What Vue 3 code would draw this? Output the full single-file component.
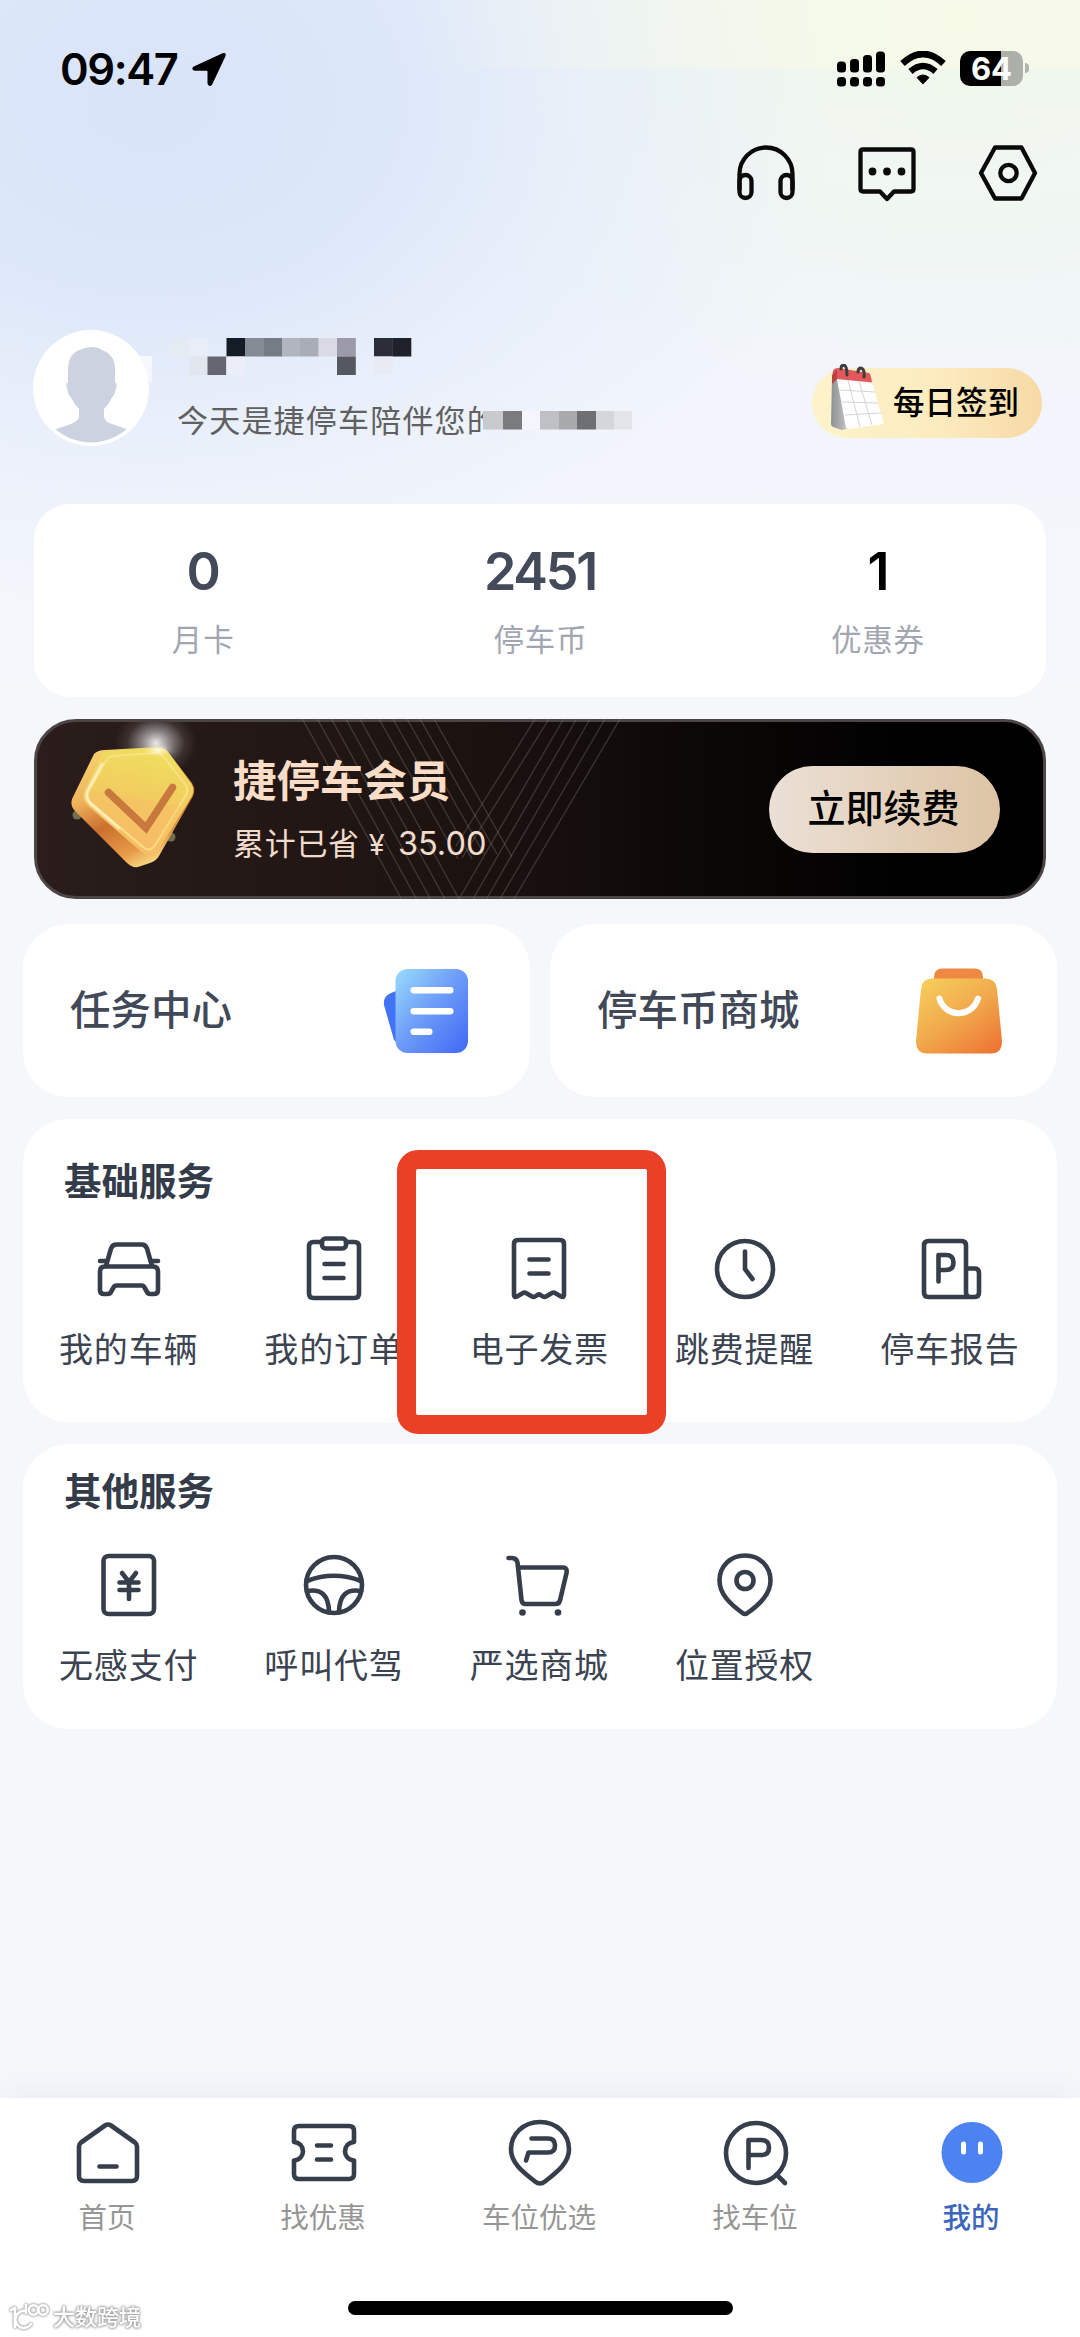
<script setup>
const stats = [
  { value: '0', label: '月卡' },
  { value: '2451', label: '停车币' },
  { value: '1', label: '优惠券', strong: true },
]

const nameBlocks = [
  [170, 0, '#e5ebf3'], [189, 0, '#e8edf7'],
  [226.5, 0, '#141d26'], [245, 0, '#858b94'], [263.5, 0, '#767c85'], [282, 0, '#b0b5bf'],
  [300, 0, '#a8adb7'], [318.5, 0, '#d9dae6'], [337, 0, '#9a9aa8'], [374, 0, '#2b2d39'], [392.5, 0, '#1f212b'],
  [189, 1, '#e2e6ef'], [207.5, 1, '#666672'], [226.5, 1, '#ebedf8'], [337, 1, '#55585e'], [374, 1, '#e8ebf4'],
]
const dayBlocks = [
  [483, '#c9cacd', 20], [503, '#7a7b7c', 19], [522, '#f5f6fd', 18], [540, '#bfc0c5', 19], [559, '#a8a9ad', 18],
  [577, '#6e6f74', 19], [596, '#d5d6db', 18], [614, '#e3e4ea', 18],
]

const slantsDown = [
  [302.5, 0, 401.5, 180], [317.5, 0, 416.5, 180], [331.5, 0, 430.5, 180], [346, 0, 445, 180], [360, 0, 459, 180],
  [379, 0, 458, 140], [393, 0, 472, 140], [407, 0, 484, 135], [420, 0, 497, 135], [434, 0, 512, 138],
]
const slantsUp = [
  [459, 180, 563.5, 0], [473, 180, 576.5, 0], [486.5, 180, 590, 0], [500, 180, 605, 0], [514, 180, 620, 0],
  [456, 127, 535, 0], [462, 139, 549, 0],
]

const basics = [
  { icon: 'car', label: '我的车辆' },
  { icon: 'order', label: '我的订单' },
  { icon: 'invoice', label: '电子发票' },
  { icon: 'clock', label: '跳费提醒' },
  { icon: 'report', label: '停车报告' },
]
const others = [
  { icon: 'pay', label: '无感支付' },
  { icon: 'wheel', label: '呼叫代驾' },
  { icon: 'cart', label: '严选商城' },
  { icon: 'pin', label: '位置授权' },
]

/* 72 × 72 canvas, centred on 36,36 */
const glyphs = {
  car: '<path d="M13 33 18 15.500Q19.500 11.500 23.500 11.500H48.500Q52.500 11.500 54 15.500L59 33M7 28H12M60 28H65"/><path d="M12 33.500H60Q65 33.500 65 38.500V57Q65 61 61 61H57.500Q54.500 61 53.500 58L51.500 54.500Q50.500 52.500 48.500 52.500H23.500Q21.500 52.500 20.500 54.500L18.500 58Q17.500 61 14.500 61H11Q7 61 7 57V38.500Q7 33.500 12 33.500Z"/>',
  order: '<path d="M24 9H15.500Q11 9 11 13.500V60.500Q11 65 15.500 65H56.500Q61 65 61 60.500V13.500Q61 9 56.500 9H48"/><rect x="24" y="5.500" width="24" height="10" rx="3.500"/><path d="M26.500 31H45.500M26.500 45H45.500"/>',
  invoice: '<path d="M11 62V11Q11 7 15 7H57Q61 7 61 11V62Q61 65 58 63.500L52 60Q50.500 59 49 60L43 63.500Q41 64.500 39 63L37 61.500Q36 61 35 61.500L33 63Q31 64.500 29 63.500L23 60Q21.500 59 20 60L14 63.500Q11 65 11 62Z"/><path d="M26.500 26.500H45.500M26.500 40.500H45.500"/>',
  clock: '<circle cx="36" cy="36" r="28"/><path d="M36 18.500V36L43.500 46"/>',
  report: '<path d="M46 64H14.500Q10 64 10 59.500V12.500Q10 8 14.500 8H47.500Q52 8 52 12.500V59Q52 64 56 64M52 35.500H60.500Q65 35.500 65 40V59.500Q65 64 60.500 64H44"/><path d="M24.500 48.500V22H32Q39.500 22 39.500 29.500T32 37H25"/>',
  pay: '<rect x="10.500" y="7" width="50.500" height="58" rx="5"/><path d="M29 24 36 33 43 24M26.500 33.500H45.500M26.500 41H45.500M36 33V50"/>',
  wheel: '<circle cx="36" cy="36" r="28"/><path d="M9 32Q36 21.500 63 32M9 42Q30.500 38 31 63M63 42Q41.500 38 41 63"/>',
  cart: '<path d="M5.500 9H9Q13.500 9 14.500 13.500L18.500 51Q19 55 22.500 55H52.500Q56 55 57 51.500L63.500 24Q64.500 18.500 60 18.500H15"/><circle cx="19.500" cy="63.500" r="3.300" fill="currentColor" stroke="none"/><circle cx="55" cy="63.500" r="3.300" fill="currentColor" stroke="none"/>',
  pin: '<path d="M36 6.500C50.500 6.500 61.500 17 61.500 31.500C61.500 45 51 55 38.500 64Q36 66 33.500 64C21 55 10.500 45 10.500 31.500C10.500 17 21.500 6.500 36 6.500Z"/><circle cx="36" cy="31.500" r="8.500"/>',
  home: '<path d="M7 28.500Q7 26 9 24.500L33 7.500Q36 5.500 39 7.500L63 24.500Q65 26 65 28.500V58Q65 63 60 63H12Q7 63 7 58Z"/><path d="M27.500 48.500H44.500"/>',
  ticket: '<path d="M6 24V13Q6 8 11 8H61Q66 8 66 13V24C54 25.500 54 41 66 42.500V56Q66 61 61 61H11Q6 61 6 56V42.500C18 41 18 25.500 6 24Z"/><path d="M29 27.500H43M29 41.500H43"/>',
  spot: '<path d="M36 4C52.500 4 65 16 65 31.500C65 45 53 54 41 63.500Q36 67.500 31 63.500C19 54 7 45 7 31.500C7 16 19.500 4 36 4Z"/><path d="M27.500 20.500H44Q51 20.500 51 27.500T44 34.500H24.500L22 42.500"/>',
  search: '<circle cx="36" cy="35" r="30"/><path d="M56.500 56.500 65 65"/><path d="M28.500 50V22H41Q49 22 49 29.500T41 37H29"/>',
}

const tabs = [
  { icon: 'home', label: '首页' },
  { icon: 'ticket', label: '找优惠' },
  { icon: 'spot', label: '车位优选' },
  { icon: 'search', label: '找车位' },
  { icon: 'me', label: '我的', active: true },
]
</script>

<template>
  <div class="screen">
    <header class="status">
      <div class="clock">
        <span class="time">09:47</span>
        <svg width="36" height="36" viewBox="0 0 36 36"><path d="M2.800 15.600 31.500 2.200Q36 .8 34.300 5.500L21.300 33.300Q20.300 35.400 18.300 34.700 16.500 34 16.500 32V20.500Q16.500 19.700 15.700 19.700H4Q1.800 19.700 1.400 18 1.100 16.400 2.800 15.600Z" /></svg>
      </div>
      <div class="signals">
        <svg width="48" height="36" viewBox="0 0 48 36">
          <rect x="0" y="10.500" width="9" height="11" rx="3.500" /><rect x="13" y="8" width="9" height="13.500" rx="3.500" /><rect x="26" y="4" width="9" height="17.500" rx="3.500" /><rect x="39" y="0.500" width="9" height="21" rx="3.500" />
          <rect x="0" y="26" width="9" height="9.500" rx="3.500" /><rect x="13" y="26" width="9" height="9.500" rx="3.500" /><rect x="26" y="26" width="9" height="9.500" rx="3.500" /><rect x="39" y="26" width="9" height="9.500" rx="3.500" />
        </svg>
        <svg class="wifi" width="46" height="36" viewBox="0 0 46 36">
          <path d="M2.500 12.500Q23-6.500 43.500 12.500" fill="none" stroke="#000" stroke-width="6.600" />
          <path d="M10.500 20.500Q23 9.500 35.500 20.500" fill="none" stroke="#000" stroke-width="6.400" />
          <path d="M17 26.500Q23 21.500 29 26.500L23 33Z" stroke="#000" stroke-width="1" />
        </svg>
        <div class="battery"><span>64</span></div>
        <i class="nub"></i>
      </div>
    </header>

    <div class="actions">
      <svg width="60" height="60" viewBox="0 0 60 60"><path d="M3.500 46V30A26.500 26.500 0 0 1 56.500 30V46" /><rect x="3.500" y="31" width="12" height="23" rx="6" /><rect x="44.500" y="31" width="12" height="23" rx="6" /></svg>
      <svg width="60" height="60" viewBox="0 0 60 60"><path d="M6 5.500H54Q56.500 5.500 56.500 8V45Q56.500 47.500 54 47.500H37L30 55 23 47.500H6Q3.500 47.500 3.500 45V8Q3.500 5.500 6 5.500Z" /><g class="dots"><circle cx="15.500" cy="27.500" r="3.900" /><circle cx="30" cy="27.500" r="3.900" /><circle cx="44.500" cy="27.500" r="3.900" /></g></svg>
      <svg width="60" height="60" viewBox="0 0 60 60"><path d="M17 3.500H43.500L57 29 43.500 54.500H17L3 29Z" /><circle cx="30.500" cy="29" r="8.200" /></svg>
    </div>

    <section class="profile">
      <svg class="avatar" width="128" height="116" viewBox="0 0 128 116">
        <defs><clipPath id="face"><circle cx="58" cy="58" r="54.500" /></clipPath></defs>
        <path d="M100 26H119V53L113 47Z" fill="#f7f8fd" />
        <circle cx="58" cy="58" r="58" fill="#fff" />
        <path clip-path="url(#face)" fill="#ccd2df" d="M58 17Q66 17 70 20.500Q82 25 82 39V52Q85 54 82.500 60Q81 66 79 67.500Q76 74 71 79V87Q72 92 79 94L96 100V120H20V100L38 94Q45 91 46 87V79Q41 74 38 67.500Q35 65 34.500 60Q32 54 35 52V39Q35 19 58 17Z" />
      </svg>
      <div class="who">
        <svg class="name" width="280" height="37" viewBox="170 0 280 37">
          <rect v-for="(b, i) in nameBlocks" :key="i" :x="b[0]" :y="b[1] * 18.500" width="18.800" height="18.500" :fill="b[2]" />
        </svg>
        <div class="days">
          <span>今天是捷停车陪伴您的</span>
          <svg class="mask" width="149" height="40" viewBox="483 0 149 40">
            <rect x="483" y="0" width="22" height="40" fill="#edf1fb" />
            <rect v-for="(b, i) in dayBlocks" :key="i" :x="b[0]" y="10" :width="b[2]" height="18.500" :fill="b[1]" />
          </svg>
        </div>
      </div>
      <div class="checkin">
        <svg width="56" height="68" viewBox="0 0 56 68">
          <defs><linearGradient id="pad" x1="0" y1="0" x2="1" y2="0"><stop offset="0" stop-color="#8f9092" /><stop offset="1" stop-color="#c9cacb" /></linearGradient></defs>
          <path d="M2 12 7 15 19 64 12 66 3 63Q1 62 1 60Z" fill="url(#pad)" />
          <path d="M7 15 42 18 54 60 18 65 16 64Z" fill="#fff" />
          <path d="M3 7Q4 4 8 4L39 9Q41 10 42 18.500L7 15 2 19V12Z" fill="#e2595b" />
          <path d="M2 12 7 5V15L2 20Z" fill="#b93f43" />
          <path d="M9 26 45 28M12 38 48 39M15 51 51 49M18 16 30 63M29 17 42 61" stroke="#d9d4d3" stroke-width="1" fill="none" />
          <path d="M11 5Q11 1 14 1Q17 2 17 11M28 8Q28 4 31 4Q35 5 34 13" stroke="#3c3c41" stroke-width="3" fill="none" stroke-linecap="round" />
        </svg>
        <span>每日签到</span>
      </div>
    </section>

    <section class="stats">
      <div v-for="s in stats" :key="s.label" class="stat">
        <b :class="{ strong: s.strong }">{{ s.value }}</b>
        <span>{{ s.label }}</span>
      </div>
    </section>

    <section class="vip">
      <svg class="vip-lines" width="1012" height="180" viewBox="34 0 1012 180">
        <g stroke="#8d8584" stroke-opacity=".33" stroke-width="1.300">
          <line v-for="(l, i) in slantsDown" :key="'d' + i" :x1="l[0]" :y1="l[1]" :x2="l[2]" :y2="l[3]" />
          <line v-for="(l, i) in slantsUp" :key="'u' + i" :x1="l[0]" :y1="l[1]" :x2="l[2]" :y2="l[3]" />
        </g>
      </svg>
      <svg class="gem" width="150" height="174" viewBox="60 722 150 174">
        <defs>
          <linearGradient id="gemSide" x1=".1" y1="0" x2=".6" y2="1"><stop offset="0" stop-color="#f5d873" /><stop offset=".35" stop-color="#f0b45c" /><stop offset=".6" stop-color="#cb6f2e" /><stop offset=".85" stop-color="#e79a48" /><stop offset="1" stop-color="#fbdc86" /></linearGradient>
          <linearGradient id="gemFace" x1=".6" y1="0" x2=".4" y2="1"><stop offset="0" stop-color="#efdf5f" /><stop offset=".5" stop-color="#f2ca60" /><stop offset="1" stop-color="#f7bb68" /></linearGradient>
          <radialGradient id="glow"><stop offset="0" stop-color="#fff" stop-opacity=".9" /><stop offset=".35" stop-color="#fff" stop-opacity=".45" /><stop offset=".7" stop-color="#fff" stop-opacity=".1" /><stop offset="1" stop-color="#fff" stop-opacity="0" /></radialGradient>
        </defs>
        <circle cx="77" cy="815" r="4.500" fill="#70704c" /><circle cx="171" cy="837" r="4.500" fill="#70704c" />
        <ellipse cx="156" cy="743" rx="41" ry="34" fill="url(#glow)" />
        <path d="M94 754Q98 750 105 750L158 747Q164 747 168 752L192 783Q196 789 193 796L159 856Q156 861 150 863L138 867Q132 868 127 863L75 811Q70 806 72 799Z" fill="url(#gemSide)" />
        <path d="M101 755Q104 751 110 751L156 747.500Q164 747 168 752L191 783Q195 789 192 796L157 852Q152 860 144 854L87 805Q81 799 84 791Z" fill="url(#gemFace)" />
        <path d="M107 759Q109 756 114 756L155 753Q161 753 164 757L185 784Q189 789 186 795L155 845Q150 853 143 847L91 803Q86 798 88 792Z" fill="none" stroke="#fbe58d" stroke-opacity=".8" stroke-width="2" />
        <path d="M92 792Q130 797 181 806L153 847 146 847 91 801Z" fill="#f9b96a" fill-opacity=".35" />
        <path d="M102 764 88 790Q84 798 91 804L119 828" fill="none" stroke="#fff3cd" stroke-width="3" stroke-linecap="round" opacity=".75" />
        <ellipse cx="158" cy="750" rx="17" ry="8" fill="url(#glow)" />
        <path d="M108.500 792.500 146 828 172.500 787.500" fill="none" stroke="#c8793e" stroke-width="7.500" stroke-linecap="round" />
      </svg>
      <div class="vip-text">
        <h2>捷停车会员</h2>
        <p>累计已省<i>¥</i> <em>35.00</em></p>
      </div>
      <button class="renew"><span>立即续费</span></button>
    </section>

    <section class="duo">
      <div class="entry">
        <span>任务中心</span>
        <svg width="86" height="86" viewBox="0 0 86 86">
          <defs><linearGradient id="sheet" x1="0" y1="0" x2="1" y2="1"><stop offset="0" stop-color="#9adcfd" /><stop offset=".45" stop-color="#6f9ff8" /><stop offset="1" stop-color="#3f68f5" /></linearGradient></defs>
          <path d="M13 23 8 25Q0 28 1 37L11 72 18 78Z" fill="#4272f5" />
          <rect x="12.500" y="1" width="72.500" height="84" rx="12" fill="url(#sheet)" />
          <g fill="#fff"><rect x="27.500" y="19" width="43" height="6.500" rx="3.200" /><rect x="27.500" y="40" width="43" height="6.500" rx="3.200" /><rect x="27.500" y="60.500" width="22" height="6.500" rx="3.200" /></g>
        </svg>
      </div>
      <div class="entry mall">
        <span>停车币商城</span>
        <svg width="86" height="86" viewBox="0 0 86 86">
          <defs><linearGradient id="bag" x1=".1" y1="0" x2=".9" y2="1"><stop offset="0" stop-color="#f6cf5c" /><stop offset=".5" stop-color="#f1a94c" /><stop offset="1" stop-color="#ee7433" /></linearGradient></defs>
          <path d="M18 20V9Q18 .5 26.500 .5H58.500Q67 .5 67 9V20Z" fill="#ee8843" />
          <path d="M16 10.500H69Q80 10.500 81 21L86 73Q86 85.500 75 85.500H11Q0 85.500 0 73L5 21Q6 10.500 16 10.500Z" fill="url(#bag)" />
          <path d="M23.500 30.500C29 50 56 50 62 30.500" fill="none" stroke="#fff" stroke-width="6" stroke-linecap="round" />
        </svg>
      </div>
    </section>

    <section class="panel basic">
      <h3>基础服务</h3>
      <div class="grid">
        <div v-for="item in basics" :key="item.label" class="cell">
          <svg class="glyph" width="72" height="72" viewBox="0 0 72 72" v-html="glyphs[item.icon]"></svg>
          <span>{{ item.label }}</span>
        </div>
      </div>
      <div class="marker"></div>
    </section>

    <section class="panel other">
      <h3>其他服务</h3>
      <div class="grid">
        <div v-for="item in others" :key="item.label" class="cell">
          <svg class="glyph" width="72" height="72" viewBox="0 0 72 72" v-html="glyphs[item.icon]"></svg>
          <span>{{ item.label }}</span>
        </div>
      </div>
    </section>

    <nav class="tabbar">
      <div class="tabs">
        <div v-for="t in tabs" :key="t.label" class="tab" :class="{ active: t.active }">
          <svg v-if="t.active" width="72" height="72" viewBox="0 0 72 72"><circle cx="36" cy="34.500" r="30.500" fill="#4c83f0" /><rect x="25" y="23.500" width="5" height="13" rx="2.500" fill="#fff" /><rect x="42" y="23.500" width="5" height="13" rx="2.500" fill="#fff" /></svg>
          <svg v-else class="glyph" width="72" height="72" viewBox="0 0 72 72" v-html="glyphs[t.icon]"></svg>
          <span>{{ t.label }}</span>
        </div>
      </div>
      <div class="home-bar"></div>
      <div class="brand">
        <svg width="42" height="30" viewBox="0 0 42 30">
          <g fill="none" stroke-linecap="round" stroke-linejoin="round">
            <path d="M3 8 7 6V25M17 9A8.500 8.500 0 1 0 23 22M18 3V11" /><circle cx="25.500" cy="8" r="4.700" /><circle cx="35" cy="8" r="4.700" />
          </g>
        </svg>
        <span>大数跨境</span>
      </div>
    </nav>
  </div>
</template>

<style>
body {
  background: #f5f7fb;
}
</style>

<style scoped>
.screen {
  box-sizing: border-box;
  width: 1080px;
  height: 2337px;
  display: flex;
  flex-direction: column;
  overflow: hidden;
  font-family: Inter, 'Noto Sans CJK SC', sans-serif;
  color: #343c4b;
  background:
    linear-gradient(90deg, rgba(248, 251, 226, 0) 38%, rgba(249, 251, 230, 0.68) 85%) 0 0 / 1080px 69px no-repeat,
    radial-gradient(ellipse 680px 520px at 150px 100px, #d9e4f9 0%, #dce7f9 35%, rgba(228, 236, 250, 0.65) 62%, rgba(245, 247, 251, 0) 100%),
    radial-gradient(ellipse 640px 400px at 960px 20px, #f0f7ea 0%, rgba(241, 247, 239, 0.8) 45%, rgba(245, 247, 251, 0) 100%),
    linear-gradient(#edf3fa 0, #f2f5fc 400px, #f5f7fb 700px);
  background-color: #f5f7fb;
}
h2, h3, p { margin: 0; }
svg { display: block; flex: none; }

.status {
  height: 138px;
  box-sizing: border-box;
  padding: 51px 51px 0 60px;
  display: flex;
  justify-content: space-between;
  align-items: flex-start;
  color: #000;
}
.clock { display: flex; gap: 12px; }
.time {
  width: 119px;
  font-size: 43.500px;
  line-height: 36px;
  font-weight: 600;
  letter-spacing: -1.4px;
  white-space: nowrap;
}
.signals { display: flex; align-items: flex-start; }
.wifi { margin: 0 14px 0 15px; }
.battery {
  width: 63px;
  height: 35px;
  border-radius: 10px;
  background: linear-gradient(90deg, #000 41px, #adb0aa 41px);
  color: #fff;
  text-align: center;
  font-size: 31px;
  line-height: 35px;
  font-weight: 700;
}
.nub {
  width: 4px;
  height: 10px;
  margin: 12px 0 0 2px;
  border-radius: 0 5px 5px 0;
  background: #b2b5af;
}

.actions {
  display: flex;
  justify-content: flex-end;
  gap: 61px;
  height: 192px;
  padding: 6px 42px 0 0;
  box-sizing: border-box;
}
.actions svg { fill: none; stroke: #0a0a0a; stroke-width: 4.3; stroke-linejoin: round; }
.actions .dots { fill: #0a0a0a; stroke: none; }

.profile {
  display: flex;
  height: 174px;
  padding: 0 38px 0 33px;
}
.who { width: 480px; padding: 8px 0 0 9px; }
.days {
  display: flex;
  align-items: center;
  width: 480px;
  height: 40px;
  margin: 26px 0 0 7px;
}
.days span {
  width: 306px;
  white-space: nowrap;
  font-size: 31px;
  letter-spacing: 1.2px;
  line-height: 38px;
  color: #606060;
}
.mask { position: relative; }
.checkin {
  box-sizing: border-box;
  width: 230px;
  height: 70px;
  margin: 38px 0 0 auto;
  padding-left: 18px;
  display: flex;
  align-items: center;
  gap: 7px;
  border-radius: 35px;
  background: linear-gradient(90deg, #fdf3cb, #fcebbf 55%, #f7d9a6);
  color: #000;
  font-size: 31.500px;
  font-weight: 500;
  white-space: nowrap;
}
.checkin svg { margin-top: -11px; }
.checkin span { padding-bottom: 6px; }

.stats {
  display: grid;
  grid-template-columns: repeat(3, 1fr);
  height: 193px;
  margin: 0 34px;
  border-radius: 36px;
  background: #fff;
}
.stat { display: flex; flex-direction: column; align-items: center; }
.stat b {
  margin-top: 38px;
  font-size: 52px;
  line-height: 60px;
  font-weight: 600;
  color: #434a5a;
  letter-spacing: -2.2px;
}
.stat b.strong { color: #000; }
.stat span { margin-top: 20px; font-size: 30.500px; line-height: 36px; letter-spacing: .8px; padding-left: 1px; color: #a2a6b2; }

.vip {
  position: relative;
  box-sizing: border-box;
  display: flex;
  align-items: center;
  height: 180px;
  margin: 22px 34px 0;
  padding-left: 23px;
  border: 3px solid #4c4546;
  border-radius: 42px;
  background: linear-gradient(90deg, #2a1d1b, #1b1210 45%, #0c0807 65%, #000 88%);
}
.vip-lines { position: absolute; left: -3px; top: -3px; }
.gem { position: relative; }
.vip-text { position: relative; padding-left: 23px; color: #f9ddc6; }
.vip-text h2 { font-size: 43.500px; line-height: 50px; font-weight: 700; }
.vip-text p { margin-top: 20px; font-size: 31px; line-height: 36px; letter-spacing: .7px; white-space: pre; color: #f1dccb; font-weight: 400; }
.vip-text i { font-style: normal; margin: 0 3px 0 9px; font-size: 29px; }
.vip-text em { font-style: normal; font-size: 32.500px; letter-spacing: 0; }
.renew {
  position: relative;
  width: 231px;
  height: 87px;
  margin-left: auto;
  margin-right: 43px;
  padding: 0 2px 7px 0;
  border: 0;
  border-radius: 44px;
  background: linear-gradient(90deg, #ebe0d6, #ddc4a4);
  font-family: inherit;
  font-size: 38px;
  font-weight: 500;
  color: #000;
}

.duo { display: grid; grid-template-columns: 1fr 1fr; gap: 20px; margin: 25px 23px 0; }
.entry {
  box-sizing: border-box;
  display: flex;
  align-items: center;
  justify-content: space-between;
  height: 173px;
  padding: 0 61px 0 47px;
  border-radius: 45px;
  background: #fff;
  font-size: 40.500px;
  font-weight: 500;
  color: #414857;
}
.entry span { padding-bottom: 6px; }
.mall { padding-right: 55px; }

.panel {
  position: relative;
  box-sizing: border-box;
  margin: 22px 23px 0;
  border-radius: 45px;
  background: #fff;
}
.basic { height: 303px; padding-top: 41px; }
.other { height: 285px; padding-top: 26px; }
h3 { padding-left: 41px; font-size: 37.500px; line-height: 44px; font-weight: 600; color: #343b49; }
.grid { display: grid; grid-template-columns: repeat(5, 205.300px); padding-left: 3px; margin-top: 29px; }
.other .grid { margin-top: 35px; }
.cell { display: flex; flex-direction: column; align-items: center; }
.cell span { margin-top: 23px; font-size: 34px; line-height: 44px; letter-spacing: .8px; white-space: nowrap; color: #3c4351; }
.glyph { fill: none; stroke: #363e4c; stroke-width: 4.6; stroke-linecap: round; stroke-linejoin: round; color: #363e4c; }
.marker {
  position: absolute;
  left: 374px;
  top: 31px;
  box-sizing: border-box;
  width: 269px;
  height: 284px;
  border: 19px solid #e94026;
  border-radius: 21px;
}

.tabbar {
  position: relative;
  height: 239px;
  margin-top: auto;
  background: #fff;
  box-shadow: 0 -6px 30px rgba(60, 80, 110, 0.06);
}
.tabs { display: grid; grid-template-columns: repeat(5, 1fr); padding-top: 20px; }
.tab { display: flex; flex-direction: column; align-items: center; }
.tab span { margin: 10px 2px 0 0; font-size: 28.500px; line-height: 36px; font-weight: 400; color: #969696; }
.tab.active span { color: #3d66bd; font-weight: 500; }
.home-bar { width: 385px; height: 14px; margin: 65px auto 0; border-radius: 7px; background: #000; }
.brand {
  position: absolute;
  left: 8px;
  bottom: 5px;
  display: flex;
  align-items: center;
  gap: 3px;
  color: #fff;
  font-size: 22px;
  line-height: 30px;
  font-weight: 500;
  text-shadow: 0 0 2px #999, 0 0 3px #aaa;
  filter: drop-shadow(0 0 1px #bbb);
}
.brand g { stroke: #fff; stroke-width: 2.6; filter: drop-shadow(0 0 1px #999); }
</style>
